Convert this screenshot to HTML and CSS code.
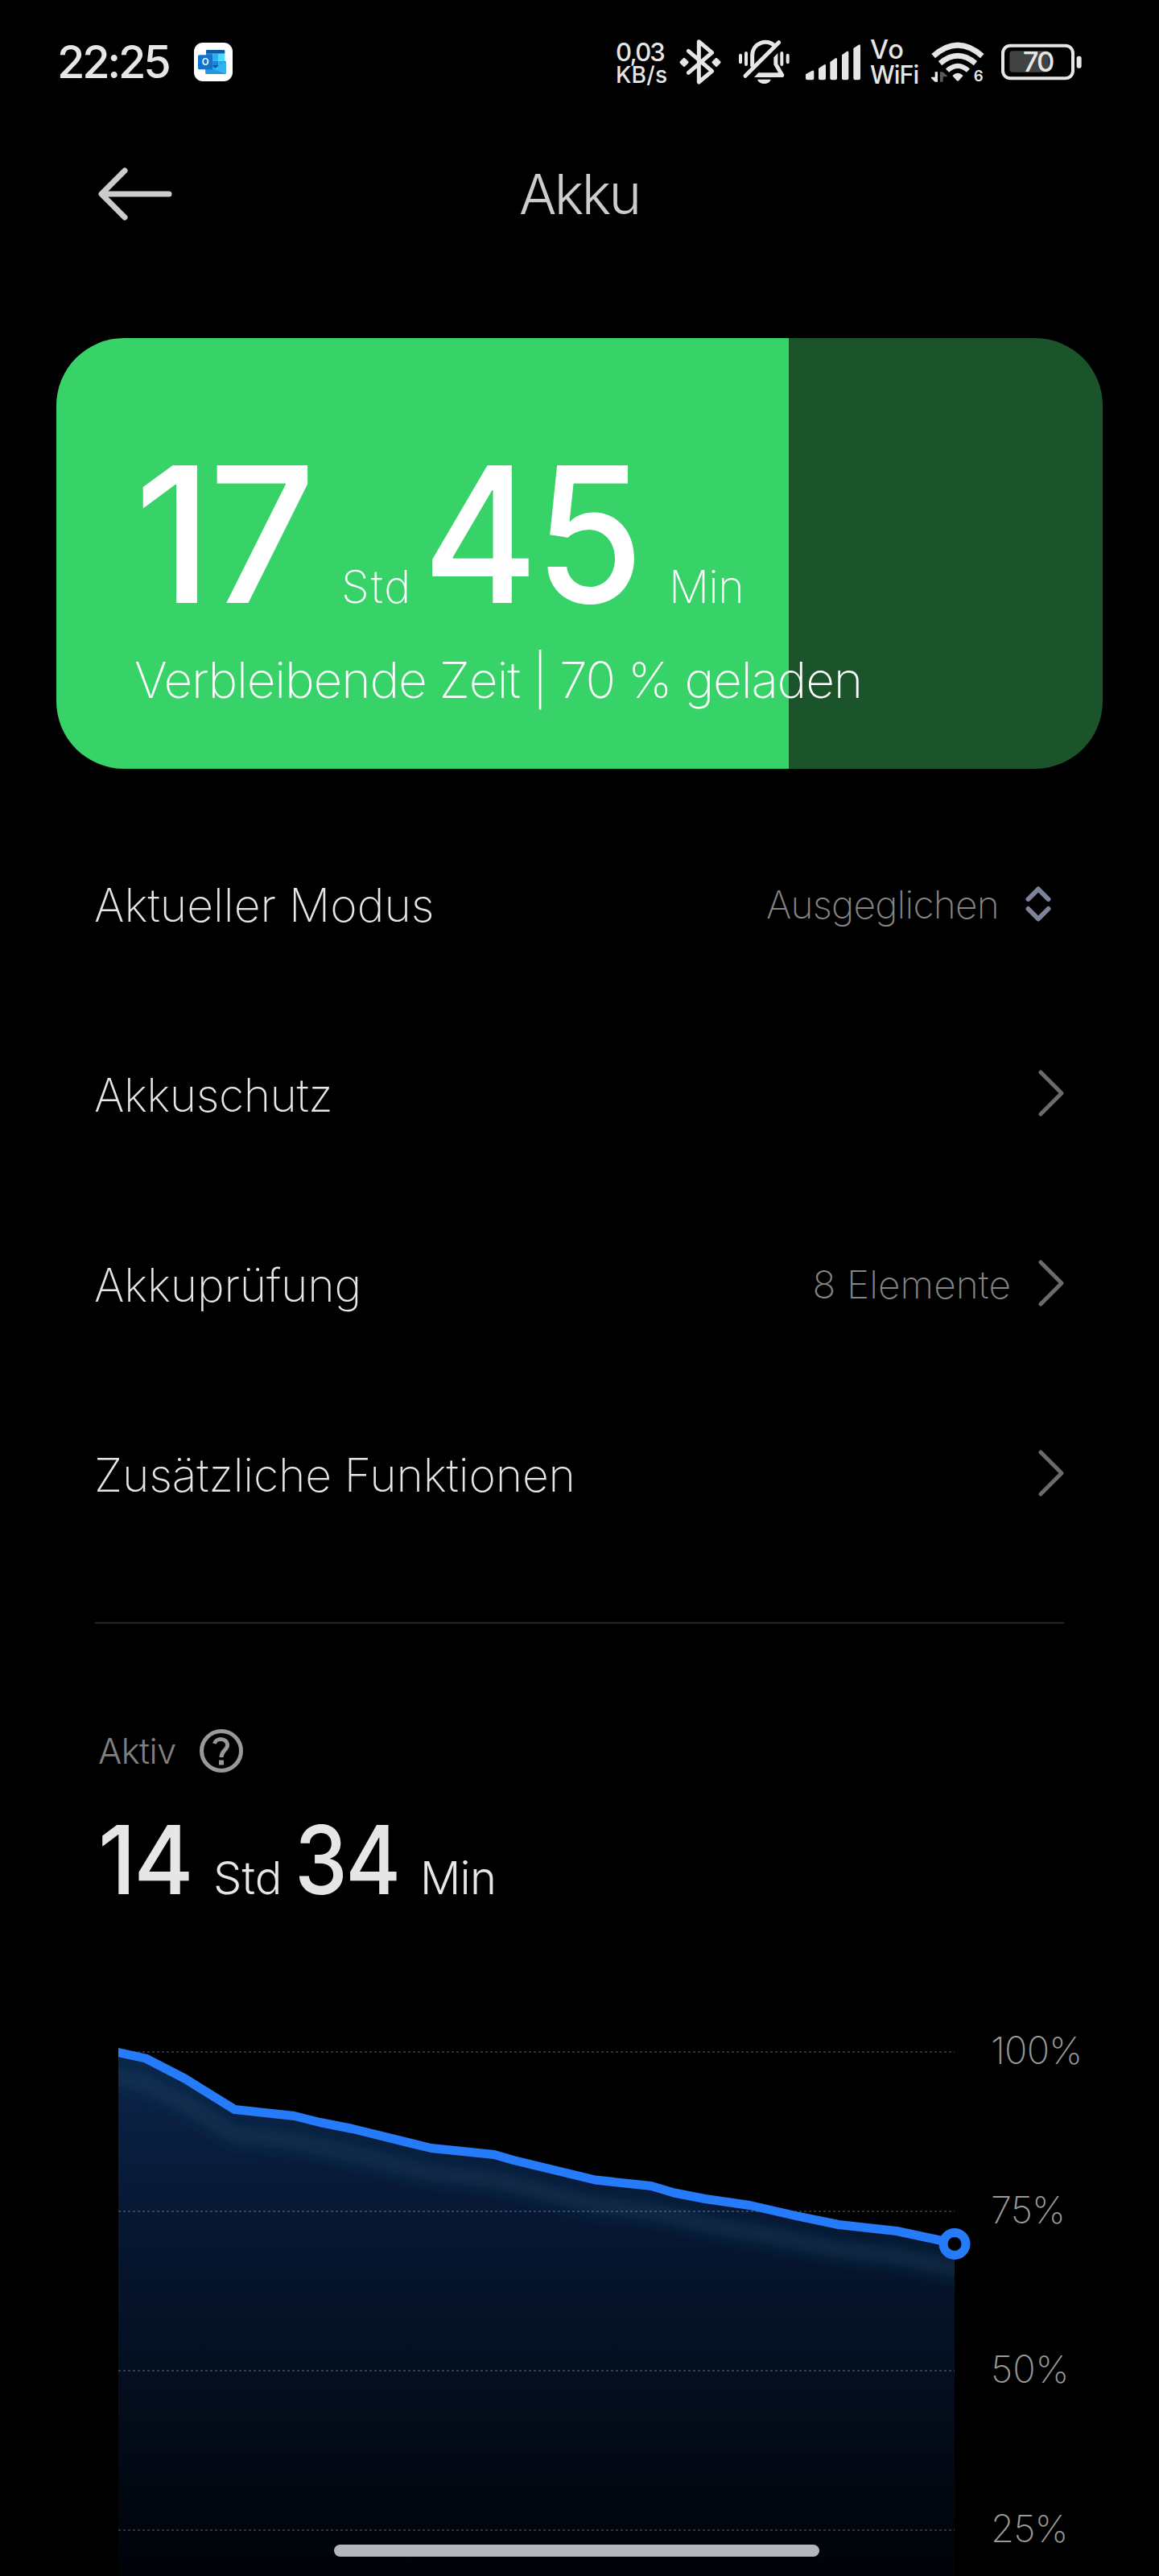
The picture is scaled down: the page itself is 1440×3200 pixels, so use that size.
FILE: index.html
```html
<!DOCTYPE html>
<html lang="de">
<head>
<meta charset="utf-8">
<title>Akku</title>
<link rel="stylesheet" href="styles.css">
</head>
<body>
<div class="screen">
  <header class="status">
    <span class="clock">22:25</span>
    <svg class="outlook" viewBox="33 24 144 144">
      <rect x="33" y="24" width="144" height="144" rx="33" fill="#fff"/>
      <path d="M82 51H144a4 4 0 0 1 4 4V65H78V55a4 4 0 0 1 4-4Z" fill="#0d5ca6"/>
      <path d="M78 65H103V92H78Z" fill="#1380d8"/>
      <path d="M103 65H125V92H103Z" fill="#2fb0ee"/>
      <path d="M125 65H148V92H125Z" fill="#51d8fd"/>
      <path d="M78 92H103V120H78Z" fill="#1263b6"/>
      <path d="M103 92H125V120H103Z" fill="#1583d8"/>
      <path d="M125 92H148V112H125Z" fill="#2ba9ea"/>
      <path d="M148 92L153 96 148 102Z" fill="#123b6d"/>
      <path d="M153 96V137a4 4 0 0 1-4 4H80a4 4 0 0 1-4-4V118H110Z" fill="#33b4ef"/>
      <path d="M76 112L153 141H80a4 4 0 0 1-4-4Z" fill="#1e96e0"/>
      <path d="M100 108H126L113 119Z" fill="#0a5aa8"/>
      <rect x="48" y="70" width="55" height="54" rx="5" fill="#0f74d1"/>
      <text class="outlook-o" x="75.5" y="109" text-anchor="middle">O</text>
    </svg>
    <div class="net"><span class="net-rate">0,03</span><span class="net-unit">KB/s</span></div>
    <svg class="bt" viewBox="312 52 156 174">
      <path d="M346 98L434 173L385 214V63L434 104L346 179" class="s15"/>
      <path d="M330 128L342 140L330 152L318 140Z M450 128L462 140L450 152L438 140Z" fill="#e6e6e6" stroke="#e6e6e6" stroke-width="9" stroke-linejoin="round"/>
    </svg>
    <svg class="bell" viewBox="530 56 195 174">
      <path d="M583 156V120C583 70 640 55 665 82" class="s15"/>
      <path d="M557 195L682 70" class="s15"/>
      <path d="M663 126L678 110V150L702 190C702 197 699 200 694 200H590L606 183H680L663 153Z" fill="#e6e6e6"/>
      <path d="M602 208H652C646 229 609 229 602 208Z" fill="#e6e6e6"/>
      <path d="M539 118V144M560 110V152M693 110V152M715 118V144" class="s12"/>
    </svg>
    <svg class="signal" viewBox="783 72 204 140">
      <path d="M783 187L806 174Q814 170 814 178V202Q814 208 808 208H789Q783 208 783 202ZM831 165L850 152Q858 147 858 155V202Q858 208 852 208H837Q831 208 831 202ZM874 141L892 128Q900 122 900 131V202Q900 208 894 208H880Q874 208 874 202ZM918 115L935 103Q943 97 943 106V202Q943 208 937 208H924Q918 208 918 202ZM961 90L979 78Q987 73 987 81V202Q987 208 981 208H967Q961 208 961 202Z" fill="#e6e6e6"/>
    </svg>
    <div class="vowifi"><span class="vo">Vo</span><span class="wf">WiFi</span></div>
    <svg class="wifi" viewBox="288 60 202 160">
      <path d="M299 119Q390 38 481 119" stroke-width="21" class="arc"/>
      <path d="M324 146Q390 90 456 146" stroke-width="20" class="arc"/>
      <path d="M351 173Q390 138 429 173" stroke-width="18" class="arc"/>
      <path d="M370 192Q390 172 410 192L394 210Q390 214 386 210Z" fill="#e6e6e6"/>
      <path d="M305 178H315V215H305L291 202V197H305Z" fill="#e6e6e6"/>
      <path d="M324 178H334L350 192V196H335V215H324Z" fill="#5a5a5a"/>
      <text class="wifi-gen" x="449" y="213">6</text>
    </svg>
    <svg class="battery" viewBox="552 70 300 138">
      <rect x="583" y="98" width="147" height="79" rx="12" fill="#424242"/>
      <rect x="558" y="78" width="261" height="122" rx="28" fill="none" stroke="#e6e6e6" stroke-width="12"/>
      <rect x="833" y="117" width="18" height="45" rx="8" fill="#e6e6e6"/>
      <text class="battery-num" x="689" y="176" text-anchor="middle">70</text>
    </svg>
  </header>

  <nav class="topbar">
    <svg class="back" viewBox="0 0 92 66"><path d="M33 4L4 33L33 62M5 33H88"/></svg>
    <h1 class="title">Akku</h1>
  </nav>

  <section class="card">
    <div class="remaining">
      <span class="big n17">17</span><span class="unit">Std</span><span class="big n45">45</span><span class="unit min">Min</span>
    </div>
    <p class="sub">Verbleibende Zeit | 70 % geladen</p>
  </section>

  <ul class="list">
    <li class="row"><span class="label l1">Aktueller Modus</span><span class="value v1">Ausgeglichen</span>
      <svg class="updown" viewBox="0 0 32 46"><path d="M3.500 17L16 4.500L28.500 17M3.500 29L16 41.500L28.500 29"/></svg></li>
    <li class="row"><span class="label l2">Akkuschutz</span>
      <svg class="chev" viewBox="0 0 32 58"><path d="M3 3L29 29L3 55"/></svg></li>
    <li class="row"><span class="label l3">Akkuprüfung</span><span class="value v3">8 Elemente</span>
      <svg class="chev" viewBox="0 0 32 58"><path d="M3 3L29 29L3 55"/></svg></li>
    <li class="row"><span class="label l4">Zusätzliche Funktionen</span>
      <svg class="chev" viewBox="0 0 32 58"><path d="M3 3L29 29L3 55"/></svg></li>
  </ul>

  <section class="active">
    <div class="active-head">
      <span class="active-label">Aktiv</span>
      <svg class="help" viewBox="0 0 54 54"><circle cx="27" cy="27" r="24.500"/><path d="M18.500 18C20 10.500 34.500 10.500 34.500 20C34.500 26 27 26.500 27 35"/><rect x="24" y="38.500" width="6" height="6"/></svg>
    </div>
    <div class="active-time">
      <span class="mid n14">14</span><span class="unit2">Std</span><span class="mid n34">34</span><span class="unit2 min">Min</span>
    </div>
  </section>

  <section class="chart">
    <svg class="plot" viewBox="147 2529 1060 671">
      <defs>
        <linearGradient id="fill" gradientUnits="userSpaceOnUse" x1="0" y1="2549" x2="0" y2="3200">
          <stop offset="0" stop-color="#0b264b"/><stop offset=".25" stop-color="#081a38"/><stop offset=".6" stop-color="#040f20"/><stop offset="1" stop-color="#000308"/>
        </linearGradient>
        <clipPath id="area"><path d="M147 2549.500L181 2557L229.500 2582L291.500 2620.500L365.500 2628.500L397.500 2636.500L438 2644.500L535.500 2668.500L614 2676.500L638 2683.500L739.500 2708L809 2715.500L837.500 2724L876 2731.500L931.500 2739.500L988.500 2752.500L1041.500 2763.500L1114 2771.500L1168 2783L1186 2787V3200H147Z"/></clipPath>
        <filter id="soft" x="-10%" y="-30%" width="120%" height="160%"><feGaussianBlur stdDeviation="9"/></filter>
      </defs>
      <g clip-path="url(#area)">
        <rect x="147" y="2529" width="1039" height="671" fill="url(#fill)"/>
        <path transform="translate(0 31)" filter="url(#soft)" d="M120 2545L147 2549.500L181 2557L229.500 2582L291.500 2620.500L365.500 2628.500L438 2644.500L535.500 2668.500L614 2676.500L739.500 2708L809 2715.500L876 2731.500L988.500 2752.500L1041.500 2763.500L1114 2771.500L1220 2794" fill="none" stroke="#12395a" stroke-opacity=".55" stroke-width="22"/>
      </g>
      <path class="grid" d="M147 2549H1186M147 2747H1186M147 2945H1186M147 3143H1186"/>
      <path class="line" d="M144 2549L147 2549.500L181 2557L229.500 2582L291.500 2620.500L365.500 2628.500L397.500 2636.500L438 2644.500L535.500 2668.500L614 2676.500L638 2683.500L739.500 2708L809 2715.500L837.500 2724L876 2731.500L931.500 2739.500L988.500 2752.500L1041.500 2763.500L1114 2771.500L1168 2783L1186 2787"/>
      <circle cx="1186" cy="2787.500" r="14" fill="#000" stroke="#267bfa" stroke-width="11"/>
    </svg>
    <div class="scale"><span class="p100">100%</span><span>75%</span><span class="p50">50%</span><span>25%</span></div>
  </section>
  <div class="homebar"></div>
</div>
</body>
</html>
```
FILE: styles.css
```css
* { box-sizing: border-box; margin: 0; padding: 0; }
body { background: #000; font-family: Inter, "Liberation Sans", sans-serif; font-kerning: normal; }
.screen { position: relative; width: 1440px; height: 3200px; overflow: hidden; background: #000; color: #e6e6e6; }
svg { display: block; flex: none; }

/* status bar */
.status { display: flex; align-items: center; height: 154px; padding-left: 71px; }
.clock { width: 170px; font-size: 55.8px; font-weight: 500; letter-spacing: -3.2px; line-height: 56px; }
.outlook { width: 48px; height: 48px; }
.outlook-o { font-size: 34px; font-weight: 600; fill: #fff; }
.net { display: flex; flex-direction: column; width: 79px; margin-left: 476px; font-weight: 550; line-height: 29px; padding-top: 4px; }
.net-rate { font-size: 31px; letter-spacing: -1.8px; }
.net-unit { font-size: 28.2px; letter-spacing: .2px; }
.s15 { fill: none; stroke: #e6e6e6; stroke-width: 15; stroke-linecap: round; stroke-linejoin: round; }
.s12 { fill: none; stroke: #e6e6e6; stroke-width: 12; stroke-linecap: round; }
.bt { width: 52px; height: 58px; }
.bell { width: 65px; height: 58px; margin-left: 21px; }
.signal { width: 68px; height: 46.7px; margin-left: 19px; }
.vowifi { display: flex; flex-direction: column; width: 75px; margin-left: 12px; font-weight: 550; line-height: 31px; }
.vo { font-size: 32.5px; letter-spacing: 1px; }
.wf { font-size: 30.6px; letter-spacing: -1px; }
.wifi { width: 67.3px; height: 53.3px; overflow: visible; }
.arc { fill: none; stroke: #e6e6e6; }
.wifi-gen { font-size: 56px; font-weight: 600; fill: #e6e6e6; }
.battery { width: 100px; height: 46px; margin-left: 21px; }
.battery-num { font-size: 104px; font-weight: 500; letter-spacing: -6px; fill: #e6e6e6; }

/* title bar */
.topbar { display: flex; align-items: center; height: 174px; padding-left: 122px; color: #ccc; }
.back { width: 92px; height: 66px; fill: none; stroke: #ccc; stroke-width: 7; stroke-linecap: round; stroke-linejoin: round; }
.title { margin-left: 431px; font-size: 69px; font-weight: 300; letter-spacing: -2.6px; line-height: 80px; }

/* battery card */
.card { width: 1300px; height: 535px; margin: 92px 0 0 70px; padding: 158px 0 0 97px; border-radius: 84px; background: linear-gradient(90deg, #38d368 70%, #1b542a 70%); color: #fff; }
.remaining { display: grid; grid-template-columns: 257px 101px 306px auto; align-items: baseline; height: 172px; }
.big { font-size: 235px; font-weight: 550; line-height: 172px; letter-spacing: -4px; transform-origin: 0 50%; }
.n17 { transform: scaleX(.99); }
.n45 { transform: scaleX(.93); }
.unit { font-size: 55.8px; font-weight: 200; line-height: 56px; letter-spacing: 2px; }
.unit.min, .unit2.min { letter-spacing: -.8px; }
.sub { margin-top: 65px; font-size: 62.2px; font-weight: 200; line-height: 60px; letter-spacing: -1.22px; white-space: nowrap; }

/* settings rows */
.list { list-style: none; margin-top: 51px; padding: 0 118px 0 117px; }
.row { display: flex; align-items: center; height: 236px; }
.label { margin-right: auto; font-size: 57px; font-weight: 250; letter-spacing: .02px; }
.l2 { letter-spacing: -.5px; }
.l3 { letter-spacing: -.2px; }
.l4 { letter-spacing: -.15px; }
.value { font-size: 47.7px; font-weight: 250; color: #858585; }
.v1 { letter-spacing: -.75px; }
.v3 { letter-spacing: .1px; }
.updown { width: 32px; height: 46px; margin: -3px 16px 0 33px; fill: none; stroke: #7d839b; stroke-width: 6; stroke-linecap: round; stroke-linejoin: round; }
.chev { width: 32px; height: 58px; margin: -4px 0 0 34px; fill: none; stroke: #6b6b6b; stroke-width: 5; stroke-linecap: round; stroke-linejoin: round; }

/* active time */
.active { margin: 65px 118px 0; padding-left: 4px; border-top: 2px solid #262626; height: 514px; }
.active-head { display: flex; align-items: center; height: 54px; margin-top: 131px; }
.active-label { width: 126px; font-size: 43.5px; font-weight: 300; letter-spacing: -.6px; color: #808080; }
.help { width: 54px; height: 54px; fill: none; stroke: #999; stroke-width: 5; }
.help rect { fill: #999; stroke: none; }
.active-time { display: grid; grid-template-columns: 143px 101px 156px auto; align-items: baseline; height: 86px; margin-top: 65px; }
.mid { font-size: 118px; font-weight: 550; line-height: 86px; letter-spacing: -3px; transform-origin: 0 50%; }
.n14 { transform: scaleX(.96); }
.n34 { transform: scaleX(.89); }
.unit2 { font-size: 56px; font-weight: 300; line-height: 56px; }

/* chart */
.chart { display: flex; padding-left: 147px; }
.plot { width: 1060px; height: 671px; }
.grid { fill: none; stroke: #fff; stroke-opacity: .19; stroke-width: 2; stroke-dasharray: 3 3; }
.line { fill: none; stroke: #267bfa; stroke-width: 11; stroke-linejoin: round; }
.scale { display: flex; flex-direction: column; gap: 162px; margin-left: 24px; font-size: 47px; font-weight: 200; line-height: 36px; color: #999; letter-spacing: -.8px; }
.p50 { letter-spacing: 0; }
.homebar { position: absolute; left: 415px; top: 3161px; width: 603px; height: 15px; border-radius: 8px; background: #b5b6ba; }
```
